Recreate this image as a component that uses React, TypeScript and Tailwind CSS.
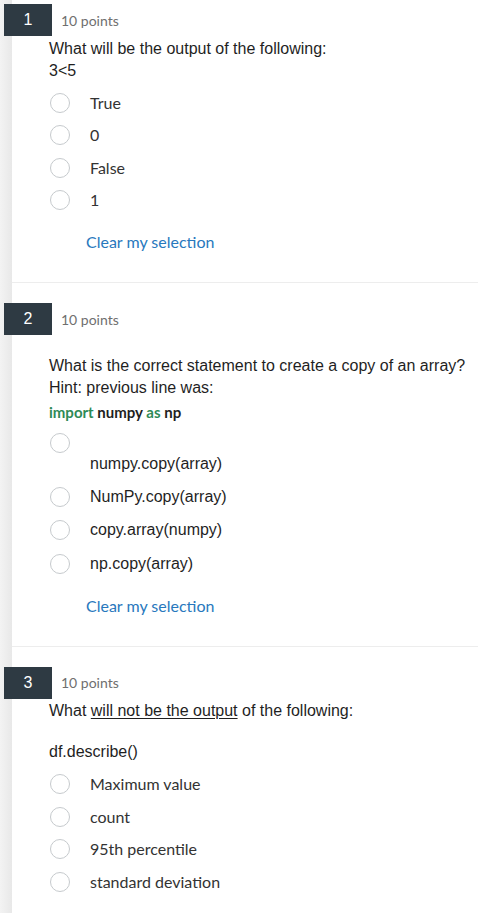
import React from "react";

const lato = "font-['Lato','Noto_Sans',sans-serif]";
const arial = "font-['Liberation_Sans','Arial',sans-serif]";

function Radio() {
  return (
    <span className="block w-[20px] h-[20px] shrink-0 rounded-full border-[1.5px] border-[#c6cacd] bg-white ml-[1px]" />
  );
}

function Header({ n }: { n: number }) {
  return (
    <div className="flex items-center">
      <div className={`w-[48px] h-[32px] bg-[#2e3a43] text-white flex items-center justify-center text-[16px] ${arial}`}>
        {n}
      </div>
      <span className={`ml-[9px] text-[14px] text-[#6f6f6f] ${lato}`}>10 points</span>
    </div>
  );
}

function Option({ label, arialText = false, h = "h-[32.5px]" }: { label: string; arialText?: boolean; h?: string }) {
  return (
    <div className={`flex items-center ${h}`}>
      <Radio />
      <span
        className={`ml-[20px] ${arialText ? `${arial} text-[16px] text-[#1f1f1f]` : `${lato} text-[16px] text-[#333]`}`}
      >
        {label}
      </span>
    </div>
  );
}

function Clear({ mt }: { mt: string }) {
  return (
    <div className={`${mt} ml-[37px] leading-[22px] text-[16px] text-[#2878bd] ${lato}`}>Clear my selection</div>
  );
}

export default function App() {
  return (
    <div className="min-h-[913px] w-full bg-[linear-gradient(to_right,#f3f3f3_0px,#e8e8e8_12px,#ffffff_12px)]">
      {/* Question 1 */}
      <div className="pl-[4px] pt-[4px]">
        <Header n={1} />
        <div className="pl-[45px]">
          <div className={`mt-[1.5px] text-[16px] leading-[22px] text-[#1f1f1f] ${arial}`}>
            <p>What will be the output of the following:</p>
            <p>3&lt;5</p>
          </div>
          <div className="mt-[5px]">
            <Option label="True" />
            <Option label="0" />
            <Option label="False" />
            <Option label="1" />
          </div>
          <Clear mt="mt-[14.5px]" />
        </div>
      </div>
      <div className="ml-[12px] mt-[29px] border-t border-[#ededed]" />

      {/* Question 2 */}
      <div className="pl-[4px] pt-[20px]">
        <Header n={2} />
        <div className="pl-[45px]">
          <div className={`mt-[19.75px] text-[16px] leading-[22.5px] text-[#1f1f1f] ${arial}`}>
            <p>What is the correct statement to create a copy of an array?</p>
            <p>Hint: previous line was:</p>
          </div>
          <p className={`leading-[24.5px] text-[15px] font-bold text-[#1f1f1f] ${lato}`}>
            <span className="text-[#2e8a57]">import</span> numpy <span className="text-[#2e8a57]">as</span> np
          </p>
          <div className="mt-[1.8px]">
            <div className="flex items-start h-[54.3px]">
              <div className="mt-[6.65px]">
                <Radio />
              </div>
              <span className={`ml-[20px] pt-[27px] leading-[22px] text-[16px] text-[#1f1f1f] ${arial}`}>
                numpy.copy(array)
              </span>
            </div>
            <Option label="NumPy.copy(array)" arialText h="h-[33.3px]" />
            <Option label="copy.array(numpy)" arialText h="h-[33.3px]" />
            <Option label="np.copy(array)" arialText h="h-[33.3px]" />
          </div>
          <Clear mt="mt-[14.75px]" />
        </div>
      </div>
      <div className="ml-[12px] mt-[29px] border-t border-[#ededed]" />

      {/* Question 3 */}
      <div className="pl-[4px] pt-[20px]">
        <Header n={3} />
        <div className="pl-[45px]">
          <div className={`mt-[1px] text-[16px] leading-[22px] text-[#1f1f1f] ${arial}`}>
            <p>
              What <span className="underline underline-offset-[2px]">will not be the output</span> of the following:
            </p>
            <p className="mt-[19px]">df.describe()</p>
          </div>
          <div className="mt-[5px]">
            <Option label="Maximum value" h="h-[32.6px]" />
            <Option label="count" h="h-[32.6px]" />
            <Option label="95th percentile" h="h-[32.6px]" />
            <Option label="standard deviation" h="h-[32.6px]" />
          </div>
        </div>
      </div>
    </div>
  );
}
